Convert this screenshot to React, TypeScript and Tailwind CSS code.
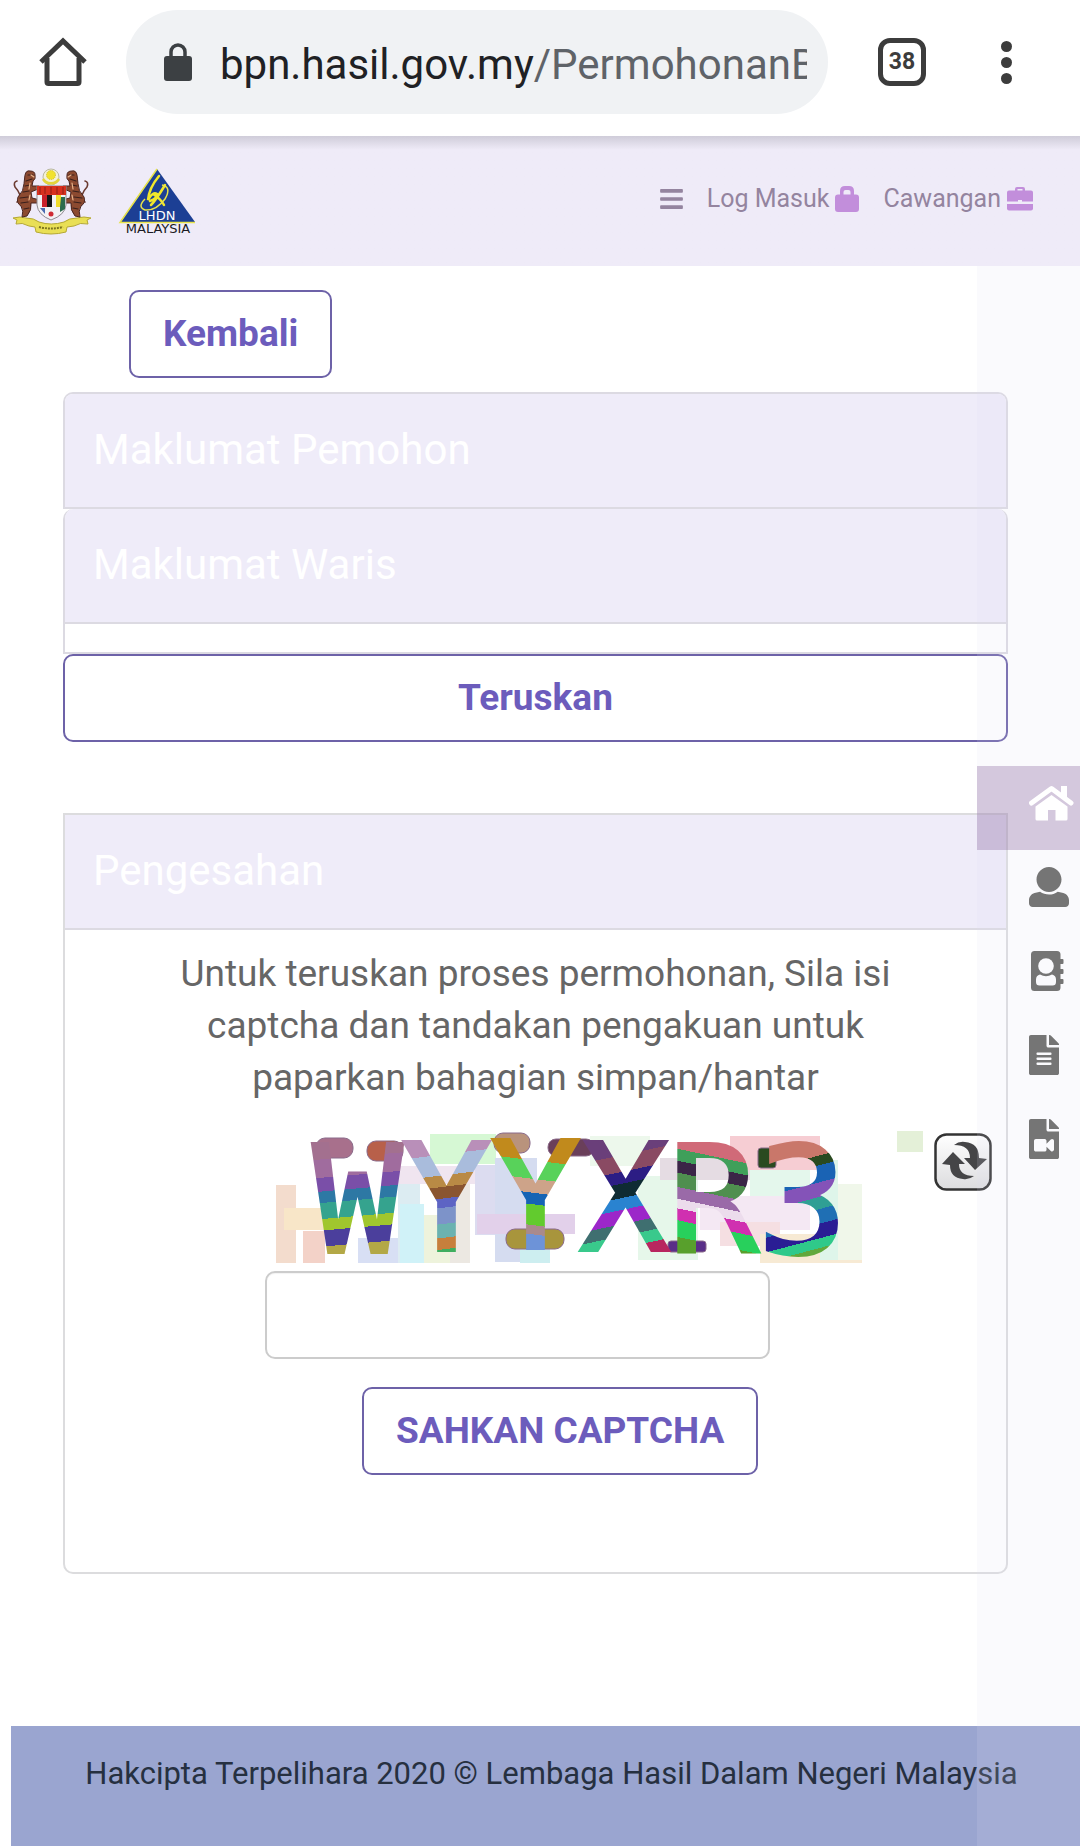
import React, { useState } from 'react';
import { FaBars, FaFileAlt, FaFileVideo } from 'react-icons/fa';

const OUTLINE_BUTTON =
  'h-[88px] rounded-[10px] border-2 border-[#6d62a8] bg-transparent px-8 text-[37px] font-bold text-[#6c5cbc]';

const HomeIcon = () => (
  <svg viewBox="0 0 45 40" className="h-10 w-[45px]" fill="currentColor" aria-hidden="true">
    <path d="M2.500 20 L22.500 5.500 L42 20" fill="none" stroke="currentColor" strokeWidth="5" strokeLinecap="round" strokeLinejoin="round" />
    <path d="M32 3 H38 V15 L32 11 Z" />
    <path d="M22.500 12 L38.500 23.500 V36 Q38.500 37.500 37 37.500 H26.500 V27 H19 V37.500 H8 Q6.500 37.500 6.500 36 V23.500 Z" />
  </svg>
);

const UserIcon = () => (
  <svg viewBox="0 0 512 512" className="h-10 w-10" fill="currentColor" aria-hidden="true">
    <path d="M256 0c88.366 0 160 71.634 160 160s-71.634 160-160 160S96 248.366 96 160 167.634 0 256 0zm183.283 333.821l-71.313-17.828c-74.923 53.89-165.738 41.864-225.94 0l-71.313 17.828C29.981 344.505 0 382.903 0 426.955V464c0 26.51 21.49 48 48 48h416c26.51 0 48-21.49 48-48v-37.045c0-44.052-29.981-82.45-72.717-93.134z" />
  </svg>
);

const AddressBookIcon = () => (
  <svg viewBox="0 0 36 40" className="h-10 w-9" aria-hidden="true">
    <path
      d="M5.500 0 H28 Q31.500 0 31.500 3.500 V8 H33.500 Q34.500 8 34.500 9 V12 Q34.500 13 33.500 13 H31.500 V18 H33.500 Q34.500 18 34.500 19 V22 Q34.500 23 33.500 23 H31.500 V28 H33.500 Q34.500 28 34.500 29 V32 Q34.500 33 33.500 33 H31.500 V36.500 Q31.500 40 28 40 H5.500 Q2 40 2 36.500 V3.500 Q2 0 5.500 0 Z"
      fill="currentColor"
    />
    <circle cx="17" cy="15" r="7.800" fill="#fafafd" />
    <path d="M11 23.500 Q17 27 23 23.500 Q27 24.500 27 28.500 V31 Q27 34.500 23.500 34.500 H10.500 Q7 34.500 7 31 V28.500 Q7 24.500 11 23.500 Z" fill="#fafafd" />
  </svg>
);

const LockIcon = () => (
  <svg viewBox="0 0 24 26" className="h-[26px] w-6 text-[#c28edb]" fill="currentColor" aria-hidden="true">
    <path
      fillRule="evenodd"
      d="M3 8.500 H5 V5 Q5 0 10 0 H14 Q19 0 19 5 V8.500 H21 Q24 8.500 24 11.500 V23 Q24 26 21 26 H3 Q0 26 0 23 V11.500 Q0 8.500 3 8.500 Z M8.500 8.500 H15.500 V6 Q15.500 4 13.500 4 H10.500 Q8.500 4 8.500 6 Z"
    />
  </svg>
);

const BriefcaseIcon = () => (
  <svg viewBox="0 0 26 26" className="h-[26px] w-[26px] text-[#c28edb]" fill="currentColor" aria-hidden="true">
    <path
      fillRule="evenodd"
      d="M8 4.500 V3 Q8 1 10 1 H16 Q18 1 18 3 V4.500 H24 Q26 4.500 26 6.500 V15.500 H15 V14 H11 V15.500 H0 V6.500 Q0 4.500 2 4.500 Z M10.500 4.500 H15.500 V3 H10.500 Z"
    />
    <path d="M0 18 H26 V22.500 Q26 24.500 24 24.500 H2 Q0 24.500 0 22.500 Z" />
  </svg>
);

const SIDE_LINKS = [
  { id: 'home', label: 'Laman Utama', icon: <HomeIcon />, active: true },
  { id: 'profile', label: 'Profil', icon: <UserIcon />, active: false },
  { id: 'contact', label: 'Hubungi', icon: <AddressBookIcon />, active: false },
  { id: 'docs', label: 'Dokumen', icon: <FaFileAlt className="h-10 w-[30px]" />, active: false },
  { id: 'video', label: 'Video', icon: <FaFileVideo className="h-10 w-[30px]" />, active: false },
];

function BrowserBar() {
  return (
    <div className="flex h-[136px] items-start bg-white pt-[10px]">
      <button aria-label="Home" className="flex h-[104px] w-[126px] shrink-0 items-center justify-center">
        <svg viewBox="0 0 48 50" className="h-[50px] w-12" fill="none" stroke="#3c3c3c" strokeWidth="5">
          <path d="M2 25 L24 4 L46 25" />
          <path d="M8 21 V45 Q8 46.500 9.500 46.500 H38.500 Q40 46.500 40 45 V21" />
        </svg>
      </button>
      <div className="flex h-[104px] min-w-0 flex-1 items-center rounded-full bg-[#f0f2f4] pr-[21px] pl-[38px]">
        <svg viewBox="0 0 28 38" className="h-[38px] w-7 shrink-0" aria-hidden="true">
          <rect x="0" y="13" width="28" height="25" rx="3" fill="#3c4043" />
          <path d="M7 15 V9 a7 7 0 0 1 14 0 V15" fill="none" stroke="#3c4043" strokeWidth="3.500" />
        </svg>
        <div className="ml-7 min-w-0 flex-1 overflow-hidden pt-1 text-[42px] whitespace-nowrap text-[#5f6368]">
          <span className="text-[#202124]">bpn.hasil.gov.my</span>/PermohonanB
        </div>
      </div>
      <div className="flex h-[104px] w-[252px] shrink-0 items-center pl-[50px]">
        <button
          aria-label="38 tabs"
          className="flex h-12 w-12 items-center justify-center rounded-xl border-[5px] border-[#3c3c3c] text-[23px] font-bold text-[#3c3c3c]"
        >
          38
        </button>
        <button aria-label="Menu" className="ml-[75px] flex w-3 flex-col gap-[5px]">
          <span className="h-[11px] w-[11px] rounded-full bg-[#3c3c3c]" />
          <span className="h-[11px] w-[11px] rounded-full bg-[#3c3c3c]" />
          <span className="h-[11px] w-[11px] rounded-full bg-[#3c3c3c]" />
        </button>
      </div>
    </div>
  );
}

// Left half of the supporters; the right half is the same group mirrored
const Tiger = () => (
  <g strokeLinecap="round" strokeLinejoin="round">
    <path d="M5 35 Q10 34 8 28 Q6 23 3 20 Q1 15 5 14" fill="none" stroke="#6b3a30" strokeWidth="1.600" />
    <path
      d="M13 8 Q14 3 18 4 Q23 4 23 8 Q24 12 21 14 L20 19 L27 19 L26 22 L19 25 L20 31 L28 33 L26 36 L19 36 Q20 43 15 49 L10 50 Q12 44 9 39 Q4 36 6 30 Q12 24 12 17 Z"
      fill="#8c4a30"
      stroke="#4a2520"
      strokeWidth="1"
    />
    <path d="M16 8 H21 M14 14 L20 12 M13 19 L18 18 M11 25 L17 24 M8 31 L16 30 M9 36 L16 35 M12 42 L17 41" stroke="#3a201c" strokeWidth="1.200" />
    <path d="M19 8 L22 10 M18 16 L17 22 M18 28 L17 33" stroke="#e8b48c" strokeWidth="1.200" />
  </g>
);

const CoatOfArms = () => (
  <svg viewBox="0 0 80 68" className="h-[68px] w-20" role="img" aria-label="Jata Negara">
    <circle cx="39" cy="10" r="8" fill="#f4f1d8" stroke="#b9b8a0" strokeWidth="1" />
    <path d="M31 12 a9 8 0 0 0 16 0" fill="none" stroke="#e3d43c" strokeWidth="2.500" />
    <circle cx="39" cy="8" r="4.500" fill="#f2e22e" stroke="#d0bc24" strokeWidth="1" strokeDasharray="1 1" />
    <path d="M1 51 Q8 49 14 51 Q22 51 27 55 Q39 59 52 55 Q57 51 65 51 Q72 49 79 51 L75 53 L76 57 Q68 55 62 59 L55 60 L54 65 Q39 69 24 65 L23 60 L17 59 Q10 55 4 57 L5 53 Z" fill="#e9df55" stroke="#b5a833" strokeWidth="1" />
    <Tiger />
    <g transform="translate(78 0) scale(-1 1)">
      <Tiger />
    </g>
    <path d="M25 19 H54 V38 Q53 48 39 53 Q26 48 25 38 Z" fill="#f3f1f4" stroke="#8f8a90" strokeWidth="1" />
    <path d="M25 19 H54 V28 H25 Z" fill="#d8301f" />
    <path d="M28 20 V27 M33 20 V27 M39 20 V27 M45 20 V27 M51 20 V27" stroke="#8d1f18" strokeWidth="1" />
    <path d="M30 28 h5 v12 h-5 z" fill="#c8202b" />
    <path d="M35 28 h5 v12 h-5 z" fill="#151515" />
    <path d="M44 28 h5 v12 h-5 z" fill="#f1dc2b" />
    <path d="M49 30 h4 v12 l-5 3 v-5 z" fill="#2c6b4e" />
    <path d="M28 41 l5 6 v-6 z" fill="#4a6ab0" />
    <circle cx="39" cy="47" r="2.500" fill="#cf2a34" />
    <path d="M27 60 Q39 63 51 60" fill="none" stroke="#7d7420" strokeWidth="2" strokeDasharray="2 1" />
  </svg>
);

const LhdnLogo = () => (
  <svg viewBox="0 0 80 68" className="h-[68px] w-20" role="img" aria-label="LHDN Malaysia">
    <path d="M39 2 L77 55 H2 Z" fill="#1c3f94" />
    <path d="M39 2 L2 55.500 H77" fill="none" stroke="#e8e34a" strokeWidth="1.500" />
    <path d="M41 9 Q31 21 30 33 Q35 24 39 27 Q40 31 32 34 M47 18 Q38 33 33 38 M35 27 Q43 32 46 38" fill="none" stroke="#f2e72b" strokeWidth="2.500" strokeLinecap="round" />
    <path d="M44 18 Q54 20 47 32 Q38 44 27 43 Q19 40 27 32" fill="none" stroke="#e8e34a" strokeWidth="1.500" />
    <text x="39" y="53" textAnchor="middle" fontFamily="DejaVu Sans, sans-serif" fontSize="13" fill="#ffffff">
      LHDN
    </text>
    <text x="40" y="66" textAnchor="middle" fontFamily="DejaVu Sans, sans-serif" fontSize="13" fill="#1a1a22">
      MALAYSIA
    </text>
  </svg>
);

function SiteHeader() {
  return (
    <header className="flex h-[130px] items-center justify-between bg-[#efebf8] bg-linear-to-b from-[#cfccd9] to-[#efebf8] to-[14px] pr-[47px] pl-3">
      <div className="flex items-center gap-[26px]">
        <CoatOfArms />
        <LhdnLogo />
      </div>
      <nav className="flex items-center pb-1 text-[25px] text-[#94849f]">
        <button aria-label="Menu">
          <FaBars className="h-[26px] w-[23px]" />
        </button>
        <a href="#login" className="ml-6 flex items-center gap-[6px]">
          Log Masuk
          <LockIcon />
        </a>
        <a href="#branch" className="ml-6 flex items-center gap-[6px]">
          Cawangan
          <BriefcaseIcon />
        </a>
      </nav>
    </header>
  );
}

// Each letter is painted with uneven bands, top to bottom: [end offset, colour]
type Band = [number, string];

const CAPTCHA_CHARS: { id: string; char: string; x: number; y: number; size: number; tilt: number; bands: Band[] }[] = [
  {
    id: 'w', char: 'W', x: 53, y: 142, size: 148, tilt: 10,
    bands: [[0.14, '#a3708f'], [0.3, '#a06c9e'], [0.42, '#7a4fa8'], [0.52, '#2d78a4'], [0.66, '#35a38e'], [0.76, '#a0c62e'], [0.9, '#4b3f9c'], [1, '#b3a846']],
  },
  {
    id: 'y1', char: 'Y', x: 142, y: 140, size: 148, tilt: 14,
    bands: [[0.12, '#b98fb9'], [0.3, '#a9bcdc'], [0.4, '#b98a45'], [0.5, '#8a5530'], [0.58, '#5d64c4'], [0.72, '#7d93c9'], [0.84, '#6bb2b0'], [0.94, '#c77f3c'], [1, '#3fae5f']],
  },
  {
    id: 'y2', char: 'Y', x: 231, y: 138, size: 148, tilt: -14,
    bands: [[0.18, '#c18a1c'], [0.34, '#58d25a'], [0.46, '#cda389'], [0.56, '#1664b4'], [0.74, '#62cb2e'], [0.82, '#a98a8c'], [1, '#6d93d8']],
  },
  {
    id: 'x', char: 'X', x: 320, y: 140, size: 148, tilt: 24,
    bands: [[0.12, '#6a3f7a'], [0.26, '#8a4a63'], [0.36, '#2c1d84'], [0.48, '#0f2b33'], [0.58, '#2a83d0'], [0.7, '#9c27c9'], [0.8, '#3f6f70'], [0.9, '#39c98c'], [1, '#b8265f']],
  },
  {
    id: 'r', char: 'R', x: 409, y: 142, size: 148, tilt: -24,
    bands: [[0.14, '#d06a78'], [0.24, '#3f9f5a'], [0.34, '#3b2547'], [0.46, '#4f8f4f'], [0.56, '#9a6aa8'], [0.64, '#ecdcec'], [0.74, '#d030b0'], [0.88, '#28d05c'], [1, '#58a02c']],
  },
  {
    id: '3', char: '3', x: 498, y: 143, size: 148, tilt: 30,
    bands: [[0.16, '#c9776a'], [0.24, '#2a4a20'], [0.38, '#1a63b4'], [0.5, '#8453b8'], [0.6, '#2f9f94'], [0.72, '#1f6fb4'], [0.84, '#2a1d94'], [0.92, '#2fc98a'], [1, '#62a83c']],
  },
];

// [x, y, width, height, colour]
const CAPTCHA_NOISE: [number, number, number, number, string][] = [
  [16, 75, 20, 78, '#f3dccd'],
  [24, 98, 40, 22, '#f8e6c8'],
  [43, 121, 22, 32, '#f3d2c8'],
  [98, 128, 44, 25, '#d8dff4'],
  [138, 73, 22, 80, '#dcecf2'],
  [158, 105, 34, 48, '#eef3dc'],
  [140, 94, 24, 59, '#d0f2f8'],
  [190, 60, 20, 93, '#ece8e2'],
  [170, 24, 66, 30, '#d6f8d4'],
  [135, 56, 80, 18, '#f0e5f0'],
  [215, 55, 32, 70, '#dcdcf0'],
  [235, 48, 42, 104, '#d5dcf0'],
  [217, 104, 98, 20, '#e2d0ea'],
  [260, 124, 30, 29, '#cdeef0'],
  [330, 26, 60, 30, '#edf8ec'],
  [378, 66, 60, 84, '#e6f7ea'],
  [400, 48, 90, 22, '#e5dce3'],
  [470, 26, 90, 34, '#f6cdd3'],
  [490, 60, 60, 34, '#e4f7ec'],
  [440, 86, 110, 34, '#f4e8f3'],
  [460, 112, 60, 24, '#f5dfe2'],
  [500, 124, 102, 29, '#f7ead4'],
  [560, 50, 18, 100, '#def5ea'],
  [578, 74, 24, 76, '#f0f7ea'],
  [637, 21, 26, 21, '#e4f0d8'],
];

const CaptchaImage = () => (
  <svg viewBox="16 21 648 132" className="h-[132px] w-[648px] min-w-0 overflow-visible" role="img" aria-label="Captcha">
    <defs>
      {CAPTCHA_CHARS.map(({ id, x, tilt, bands }) => (
        <linearGradient key={id} id={`band-${id}`} x1={x + 46} x2={x + 46 + tilt} y1="30" y2="144" gradientUnits="userSpaceOnUse">
          {bands.map(([end, color], i) => (
            <React.Fragment key={color}>
              <stop offset={i === 0 ? 0 : bands[i - 1][0]} stopColor={color} />
              <stop offset={end} stopColor={color} />
            </React.Fragment>
          ))}
        </linearGradient>
      ))}
    </defs>
    {CAPTCHA_NOISE.map(([x, y, width, height, fill]) => (
      <rect key={`${x}-${y}`} x={x} y={y} width={width} height={height} fill={fill} />
    ))}
    {/* serif blobs on the slab letters */}
    <g stroke="#8a6a8a" strokeWidth="1">
      <rect x="56" y="28" width="37" height="20" rx="9" fill="#a8708c" />
      <rect x="107" y="31" width="36" height="20" rx="9" fill="#b8604a" />
      <rect x="234" y="23" width="36" height="20" rx="9" fill="#b9937c" />
      <rect x="288" y="29" width="46" height="17" rx="8" fill="#6a3f5a" />
      <rect x="246" y="119" width="58" height="20" rx="9" fill="#a8953c" />
      <rect x="408" y="131" width="38" height="11" rx="3" fill="#5a2f88" />
      <rect x="498" y="38" width="18" height="20" rx="3" fill="#2a4a20" />
    </g>
    {CAPTCHA_CHARS.map(({ id, char, x, y, size }) => (
      <text
        key={id}
        x={x}
        y={y}
        fontFamily="DejaVu Sans Mono, monospace"
        fontSize={size}
        fill={`url(#band-${id})`}
        stroke={`url(#band-${id})`}
        strokeWidth="4"
      >
        {char}
      </text>
    ))}
  </svg>
);

const RefreshIcon = () => (
  <svg viewBox="0 0 58 58" className="h-[58px] w-[58px]" aria-hidden="true">
    <defs>
      <linearGradient id="refresh-face" x1="0" y1="0" x2="0" y2="1">
        <stop offset="0" stopColor="#ffffff" />
        <stop offset="1" stopColor="#dcdcde" />
      </linearGradient>
    </defs>
    <rect x="1.500" y="1.500" width="55" height="55" rx="11" fill="url(#refresh-face)" stroke="#333333" strokeWidth="2.500" />
    <path d="M20 12 Q25 8 31 9 Q45 10 45 25 L53 26 L41 37 L30 25 L36 25 Q36 12 20 12 Z" fill="#454547" />
    <path d="M40 43 Q35 47 29 46 Q16 45 16 32 L8 31 L19 19 L31 31 L25 31 Q25 43 40 43 Z" fill="#454547" />
  </svg>
);

function PanelHeading({ children }: { children: React.ReactNode }) {
  return (
    <h2 className="flex h-[115px] items-center border-b-2 border-[#dcdae2] bg-[#efecf9] px-7 pb-[2px] text-[42px] font-normal text-white">
      {children}
    </h2>
  );
}

function SideNav() {
  return (
    <aside className="absolute inset-y-0 right-0 w-[103px] bg-[#dedef0]/15 pt-[500px]">
      {SIDE_LINKS.map((link) => (
        <a
          key={link.id}
          href={`#${link.id}`}
          aria-label={link.label}
          className={`block h-[84px] pt-[17px] pl-[52px] ${link.active ? 'bg-[#8c69a0]/35 text-white' : 'text-[#757575]'}`}
        >
          {link.icon}
        </a>
      ))}
    </aside>
  );
}

export default function App() {
  const [captcha, setCaptcha] = useState('');

  return (
    <div className="flex min-h-screen flex-col overflow-x-hidden bg-white font-['Roboto',sans-serif]">
      <BrowserBar />
      <SiteHeader />

      <div className="relative flex flex-1 flex-col">
        <main className="flex-1 pt-6 pr-[72px] pb-[152px] pl-[63px]">
          <button className={`${OUTLINE_BUTTON} ml-[66px]`}>Kembali</button>

          <section className="mt-[14px] overflow-hidden rounded-t-[10px] border-2 border-b-0 border-[#dcdae2]">
            <PanelHeading>Maklumat Pemohon</PanelHeading>
          </section>
          <section className="overflow-hidden rounded-t-[10px] border-2 border-t-0 border-[#dcdae2] pb-7">
            <PanelHeading>Maklumat Waris</PanelHeading>
          </section>
          <button className={`${OUTLINE_BUTTON} w-full`}>Teruskan</button>

          <section className="mt-[71px] rounded-b-[10px] border-2 border-[#dcdcde] pb-[97px]">
            <PanelHeading>Pengesahan</PanelHeading>
            <p className="mx-auto mt-[18px] max-w-[740px] text-center text-[37px] leading-[52px] text-[#666]">
              Untuk teruskan proses permohonan, Sila isi captcha dan tandakan pengakuan untuk paparkan bahagian
              simpan/hantar
            </p>
            <div className="mt-[27px] flex items-start justify-end gap-[10px] pr-[14px]">
              <CaptchaImage />
              <button aria-label="Muat semula captcha" className="shrink-0 pt-[2px]">
                <RefreshIcon />
              </button>
            </div>
            <form className="mt-2 px-[200px]" onSubmit={(e) => e.preventDefault()}>
              <input
                type="text"
                aria-label="Captcha"
                value={captcha}
                onChange={(e) => setCaptcha(e.target.value)}
                className="block h-[88px] w-full max-w-[505px] rounded-[10px] border-2 border-[#ccc] bg-white px-6 text-[37px] text-[#555] inset-shadow-xs"
              />
              <button type="submit" className={`${OUTLINE_BUTTON} mt-7 ml-[97px] whitespace-nowrap`}>
                SAHKAN CAPTCHA
              </button>
            </form>
          </section>
        </main>

        <footer className="ml-[11px] min-h-[120px] bg-[#9aa5d0] pt-7 pl-3 text-center text-[31px] leading-10 text-[#263040]">
          Hakcipta Terpelihara 2020 © Lembaga Hasil Dalam Negeri Malaysia
        </footer>

        <SideNav />
      </div>
    </div>
  );
}
